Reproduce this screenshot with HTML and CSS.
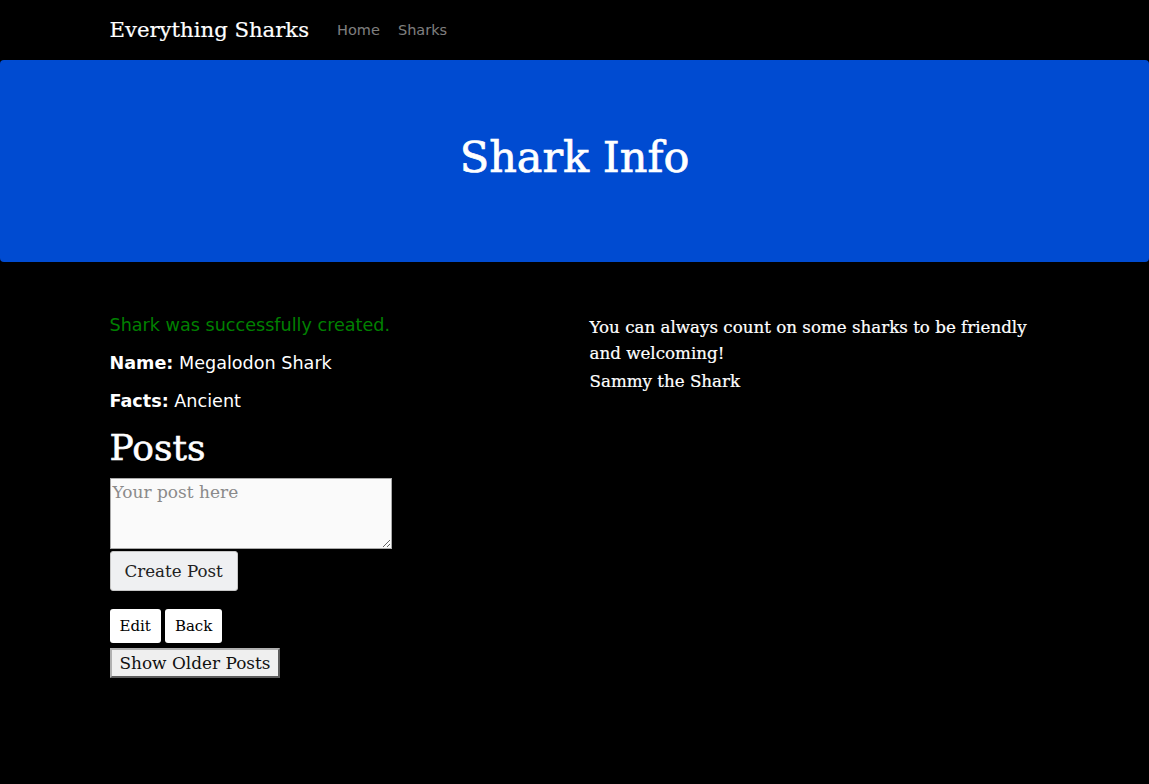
FILE: index.html
```html
<!DOCTYPE html>
<html lang="en">
<head>
    <meta charset="UTF-8">
    <meta name="viewport" content="width=device-width, initial-scale=1.0">
    <title>Everything Sharks</title>
    <link rel="stylesheet" href="styles.css">
</head>
<body>

    <!-- Navbar -->
    <nav class="navbar">
        <div class="container nav-inner">
            <a href="#" class="brand">Everything Sharks</a>
            <ul class="nav-links">
                <li><a href="#">Home</a></li>
                <li><a href="#">Sharks</a></li>
            </ul>
        </div>
    </nav>

    <div class="jumbotron">
        <h1>Shark Info</h1>
    </div>

    <div class="container">
        <div class="row">
            <div class="col">
                <p class="notice">Shark was successfully created.</p>
                <p class="field"><strong>Name:</strong> Megalodon Shark</p>
                <p class="field"><strong>Facts:</strong> Ancient</p>

                <h2 class="posts-title">Posts</h2>
                <form class="post-form">
                    <textarea class="post-body" placeholder="Your post here"></textarea>
                    <button type="button" class="btn-create">Create Post</button>
                </form>

                <div class="actions">
                    <a href="#" class="btn-light">Edit</a>
                    <a href="#" class="btn-light">Back</a>
                </div>
                <button type="button" class="btn-older">Show Older Posts</button>
            </div>

            <div class="col col-side">
                <p class="quote">You can always count on some sharks to be friendly and welcoming!</p>
                <p class="quote">Sammy the Shark</p>
            </div>
        </div>
    </div>

</body>
</html>
```

FILE: styles.css
```css
body, html {
    margin: 0;
    padding: 0;
    background-color: black;
    color: white;
    font-family: "DejaVu Serif", serif;
}

.container {
    width: 960px;
    margin: 0 auto;
    padding: 0 15px;
    box-sizing: border-box;
}

/* Navbar */
.navbar {
    height: 60px;
}

.nav-inner {
    display: flex;
    align-items: center;
    height: 100%;
}

.brand {
    color: white;
    text-decoration: none;
    font-size: 21.2px;
    margin-right: 19px;
    margin-top: -2px;
    -webkit-text-stroke: 0.2px white;
}

.nav-links {
    display: flex;
    list-style: none;
    margin: 0;
    padding: 0;
}

.nav-links a {
    display: block;
    padding: 0 9px;
    color: rgba(255, 255, 255, 0.5);
    text-decoration: none;
    font-family: "DejaVu Sans", sans-serif;
    font-size: 14.5px;
}

/* Jumbotron */
.jumbotron {
    background-color: #004bd1;
    border-radius: 4px;
    height: 202px;
    display: flex;
    align-items: center;
    justify-content: center;
}

.jumbotron h1 {
    margin: 0 0 8px;
    font-size: 43px;
    font-weight: normal;
    -webkit-text-stroke: 0.7px white; /* Merriweather is heavier */
}

/* Content */
.row {
    display: flex;
    margin: 0 -15px;
    padding-top: 50px;
}

.col {
    width: 480px;
    padding: 0 15px;
    box-sizing: border-box;
}

.col-side {
    padding-top: 2px;
}

.notice, .field {
    font-family: "DejaVu Sans", sans-serif;
    font-size: 17.6px;
    line-height: 26px;
    margin: 0 0 12px;
}

.notice {
    color: green;
}

.posts-title {
    margin: 2px 0 8px;
    font-size: 36px;
    line-height: 44px;
    font-weight: normal;
    -webkit-text-stroke: 0.6px white;
}

.post-form {
    margin: 0;
}

.post-body {
    display: block;
    width: 282px;
    height: 71px;
    box-sizing: border-box;
    margin: 0 0 2px;
    padding: 3px 2px 1px;
    background-color: #fafafa;
    border: 1px solid #a9a9a9;
    font-family: "DejaVu Serif", serif;
    font-size: 17px;
}

.post-body::placeholder {
    color: #8a8a8a;
}

.btn-create {
    display: block;
    height: 40px;
    padding: 0 14px;
    background-color: #eff0f2;
    border: 1px solid #c6c6c6;
    border-radius: 3px;
    color: #222;
    font-family: "DejaVu Serif", serif;
    font-size: 16.7px;
}

.actions {
    display: flex;
    gap: 4px;
    margin-top: 18px;
}

.btn-light {
    display: block;
    height: 34px;
    line-height: 34px;
    padding: 0 10px;
    background-color: white;
    border-radius: 3px;
    color: black;
    text-decoration: none;
    font-size: 15px;
}

.btn-older {
    display: block;
    height: 30px;
    margin-top: 5px;
    padding: 0 8px;
    background-color: #efefef;
    border: 2px outset #b0b0b0;
    color: #111;
    font-family: "DejaVu Serif", serif;
    font-size: 16.9px;
}

.quote {
    margin: 0 0 2px;
    font-size: 16.7px;
    line-height: 26px;
    -webkit-text-stroke: 0.2px white;
}
```
